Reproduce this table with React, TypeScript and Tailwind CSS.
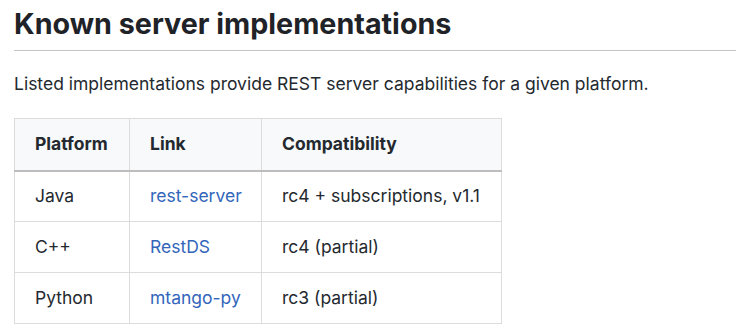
import React from "react";

const rows = [
  { p: "Java", l: "rest-server", c: "rc4 + subscriptions, v1.1" },
  { p: "C++", l: "RestDS", c: "rc4 (partial)" },
  { p: "Python", l: "mtango-py", c: "rc3 (partial)" },
];

export default function App() {
  return (
    <div
      className="w-[736px] h-[334px] bg-white pl-[14px] text-[#24292f] overflow-hidden"
      style={{ fontFamily: "Inter, 'Noto Sans', sans-serif" }}
    >
      <h2 className="text-[28.7px] leading-[48px] font-bold pt-0 text-[#1f2328]">
        Known server implementations
      </h2>
      <div className="h-px bg-[#c4c4c4] mt-[2px]" />
      <p className="text-[17.5px] leading-[24px] mt-[21px]">
        Listed implementations provide REST server capabilities for a given platform.
      </p>
      <table className="mt-[22px] border-collapse table-fixed w-[487px] text-[17.5px] leading-[24px] whitespace-nowrap">
        <colgroup>
          <col className="w-[115px]" />
          <col className="w-[132px]" />
          <col className="w-[240px]" />
        </colgroup>
        <thead>
          <tr className="bg-[#f8f9fb]">
            <th className="border border-[#dcdcdc] border-b-2 border-b-[#bdbdbd] px-[20px] h-[52px] text-left font-bold">
              Platform
            </th>
            <th className="border border-[#dcdcdc] border-b-2 border-b-[#bdbdbd] px-[20px] h-[52px] text-left font-bold">
              Link
            </th>
            <th className="border border-[#dcdcdc] border-b-2 border-b-[#bdbdbd] px-[20px] h-[52px] text-left font-bold">
              Compatibility
            </th>
          </tr>
        </thead>
        <tbody>
          {rows.map((r) => (
            <tr key={r.p}>
              <td className="border border-[#dcdcdc] px-[20px] h-[51px]">{r.p}</td>
              <td className="border border-[#dcdcdc] px-[20px] h-[51px]">
                <a className="text-[#3366bb]">{r.l}</a>
              </td>
              <td className="border border-[#dcdcdc] px-[20px] h-[51px]">{r.c}</td>
            </tr>
          ))}
        </tbody>
      </table>
    </div>
  );
}
